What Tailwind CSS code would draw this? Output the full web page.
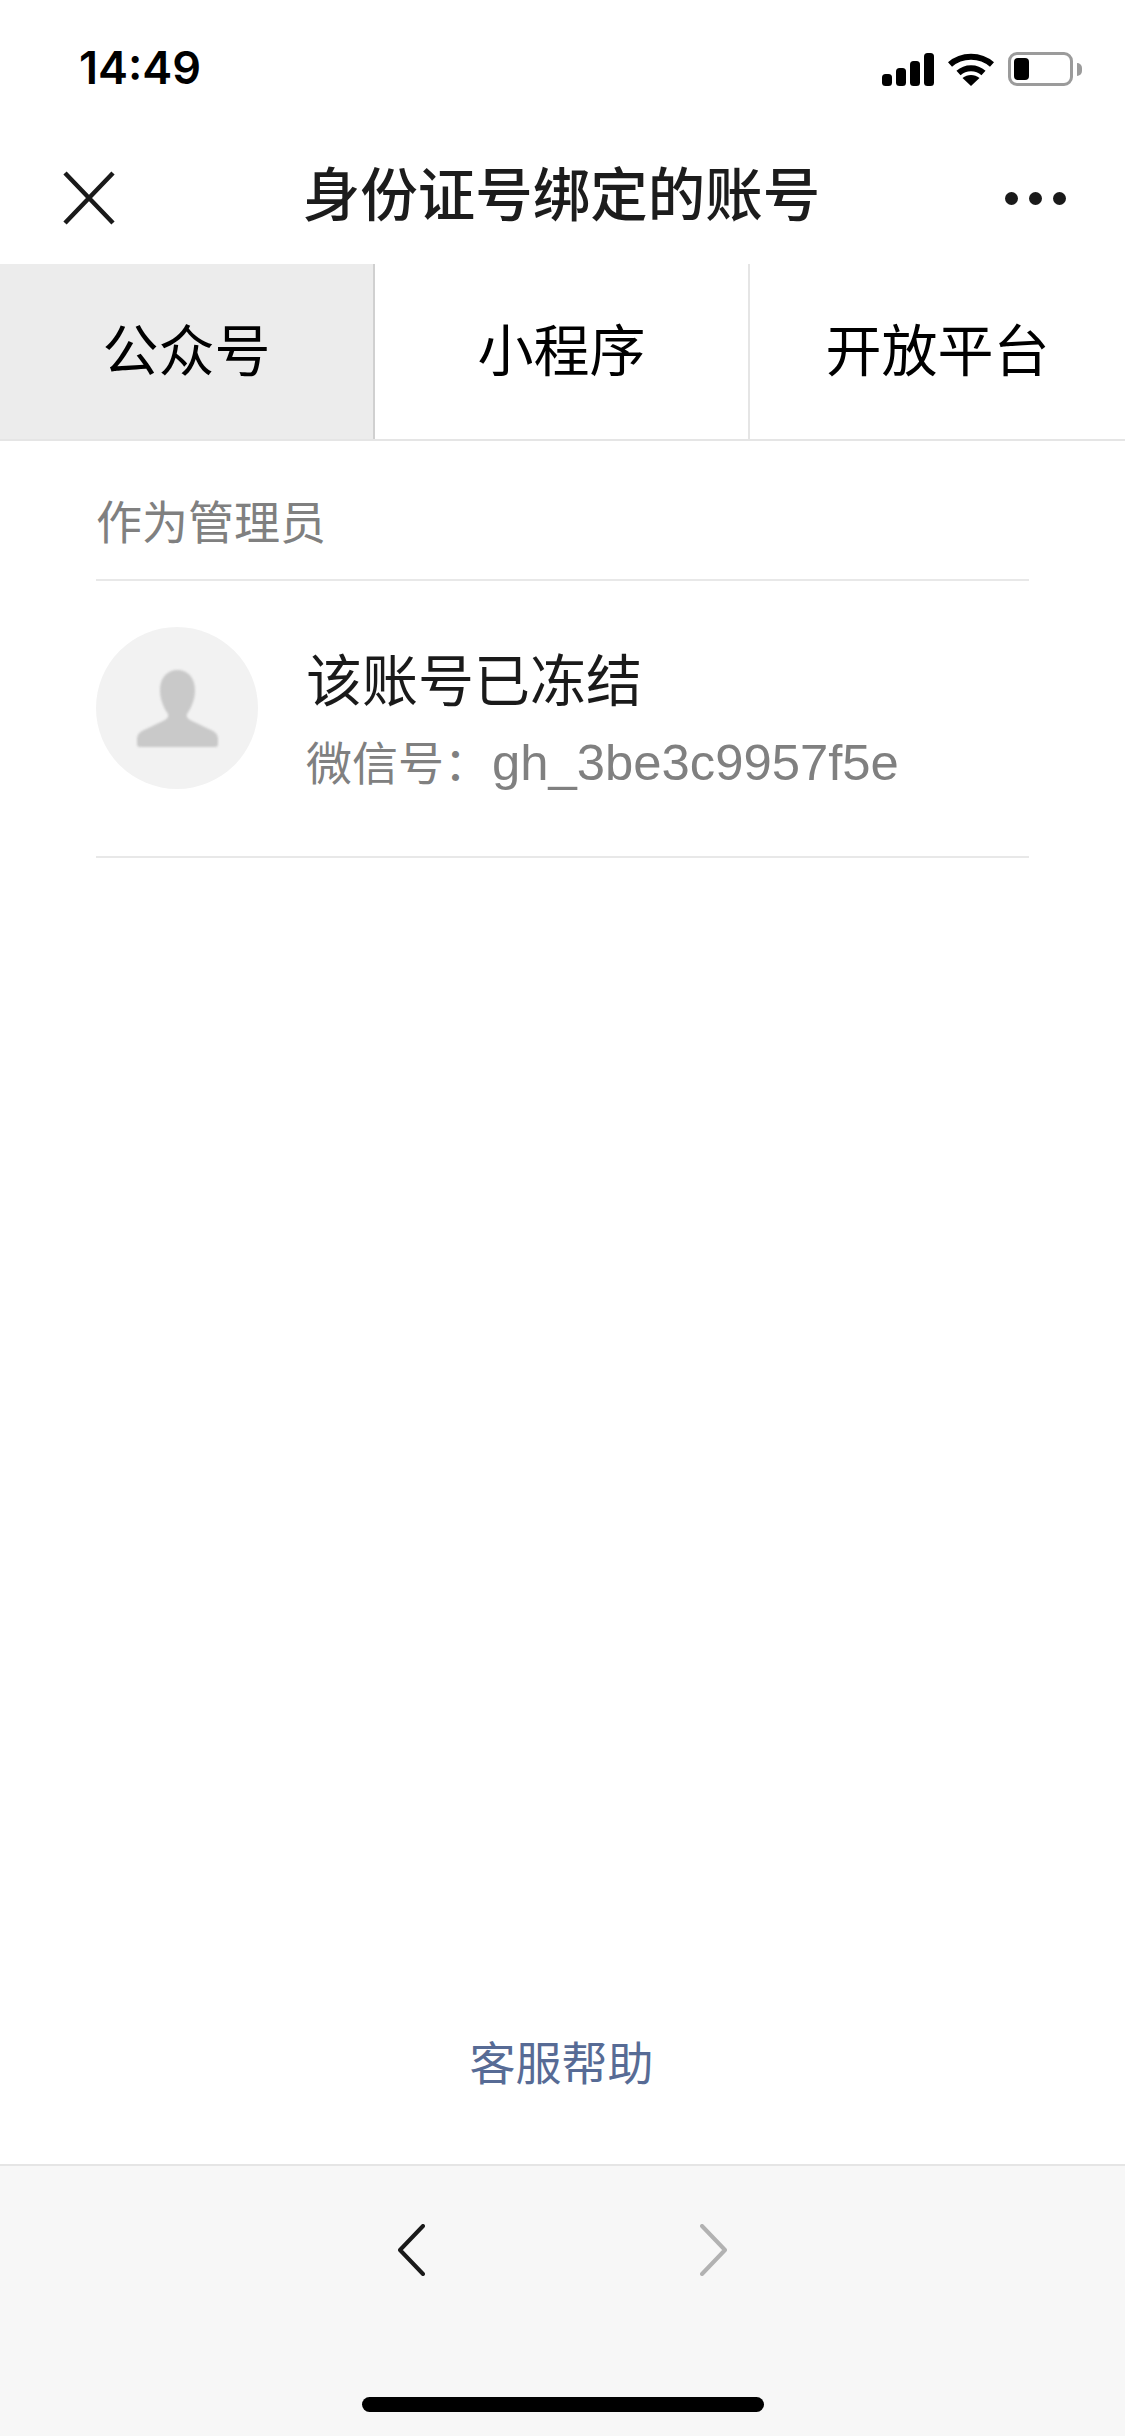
<!DOCTYPE html>
<html lang="zh-CN">
<head>
    <meta charset="UTF-8">
    <meta name="viewport" content="width=device-width, initial-scale=1.0">
    <title>身份证号绑定的账号</title>
    <script src="https://cdn.jsdelivr.net/npm/@tailwindcss/browser@4"></script>
</head>
<body class="bg-white font-['Liberation_Sans','Noto_Sans_CJK_SC',sans-serif]">
    <div class="flex h-[2436px] w-[1125px] flex-col overflow-hidden">
        <!-- status bar -->
        <div class="flex h-[132px] shrink-0 items-start justify-between pt-[46px] pl-[79px] pr-[43px]">
            <span class="font-['Inter'] text-[45px] leading-[44px] font-semibold text-black">14:49</span>
            <div class="flex items-center gap-[14px] pt-[6px]">
                <svg width="52" height="33" viewBox="0 0 52 33" fill="#000">
                    <rect x="0" y="21" width="10" height="12" rx="3.500"/>
                    <rect x="14" y="15" width="10" height="18" rx="3.500"/>
                    <rect x="28" y="8" width="10" height="25" rx="3.500"/>
                    <rect x="42" y="0" width="10" height="33" rx="3.500"/>
                </svg>
                <svg width="46" height="33" viewBox="0 0 46 33" fill="none" stroke="#000" stroke-width="6">
                    <path d="M2 11.5C13.500 1 32.500 1 44 11.500"/>
                    <path d="M10.500 20C17.500 13.500 28.500 13.500 35.500 20"/>
                    <path d="M23 33L14.500 25C19.500 21 26.500 21 31.500 25Z" fill="#000" stroke="none"/>
                </svg>
                <div class="flex items-center gap-[4px]">
                    <div class="flex h-[34px] w-[65px] items-center rounded-[9px] border-[3px] border-[#9b9b9b] p-[3px]">
                        <div class="h-full w-[15px] rounded-[4px] bg-black"></div>
                    </div>
                    <div class="h-[13px] w-[5px] rounded-r-full bg-[#9b9b9b]"></div>
                </div>
            </div>
        </div>

        <!-- nav -->
        <div class="flex h-[132px] shrink-0 items-center justify-between pl-[63px] pr-[59px]">
            <svg width="52" height="54" viewBox="0 0 52 54" fill="none" stroke="#1a1a1a" stroke-width="4.500">
                <path d="M2 2L50 52M50 2L2 52"/>
            </svg>
            <h1 class="pb-[2px] pl-[3px] text-[57.500px] leading-none font-medium text-[#1c1c1c]">身份证号绑定的账号</h1>
            <div class="flex gap-[11px]">
                <span class="size-[13px] rounded-full bg-[#1a1a1a]"></span>
                <span class="size-[13px] rounded-full bg-[#1a1a1a]"></span>
                <span class="size-[13px] rounded-full bg-[#1a1a1a]"></span>
            </div>
        </div>

        <!-- tabs -->
        <div class="grid h-[177px] shrink-0 grid-cols-[375px_375px_375px] border-b-2 border-[#e5e5e5] text-[56px] text-black">
            <div class="flex items-center justify-center border-r-2 border-[#d0d0d0] bg-[#ececec]">公众号</div>
            <div class="flex items-center justify-center border-r-2 border-[#e5e5e5]">小程序</div>
            <div class="flex items-center justify-center">开放平台</div>
        </div>

        <!-- list -->
        <div class="flex-1 px-[96px]">
            <div class="flex h-[140px] items-center border-b-2 border-[#e8e8e8] pt-[26px] text-[46px] text-[#808080]">作为管理员</div>
            <div class="flex h-[277px] items-start gap-[48px] border-b-2 border-[#e8e8e8] pt-[46px]">
                <div class="flex size-[162px] shrink-0 items-center justify-center rounded-full bg-[#f2f2f2]">
                    <svg width="81" height="77" viewBox="0 0 81 77" fill="#c9c9c9" class="blur-[1px]">
                        <path d="M40.500 0C51 0 58 8 58 20C58 30 54 38 50 44C49 47 51 49 55 51L76 61C79 63 81 65 81 69V74C81 76 80 77 78 77H3C1 77 0 76 0 74V69C0 65 2 63 5 61L26 51C30 49 32 47 31 44C27 38 23 30 23 20C23 8 30 0 40.500 0Z"/>
                    </svg>
                </div>
                <div class="mt-[15px] flex flex-col gap-[10px]">
                    <span class="text-[56px] leading-[80px] text-[#1a1a1a]">该账号已冻结</span>
                    <span class="text-[46px] leading-[62px] text-[#808080]">微信号：<span class="ml-[2px] text-[50.800px]">gh_3be3c9957f5e</span></span>
                </div>
            </div>
        </div>

        <!-- help link -->
        <div class="flex h-[100px] shrink-0 items-center justify-center pt-[4px] pr-[2px] text-[46px] text-[#576b95]">客服帮助</div>
        <div class="h-[52px] shrink-0"></div>

        <!-- bottom toolbar -->
        <div class="relative h-[272px] shrink-0 border-t-2 border-[#e5e5e5] bg-[#f7f7f7]">
            <div class="flex justify-center gap-[275px] pt-[58px]">
                <svg width="27" height="52" viewBox="0 0 27 52" fill="none" stroke="#1a1a1a" stroke-width="4" stroke-linecap="round" stroke-linejoin="round">
                    <path d="M25 2L2 26L25 50"/>
                </svg>
                <svg width="27" height="52" viewBox="0 0 27 52" fill="none" stroke="#b2b2b2" stroke-width="4" stroke-linecap="round" stroke-linejoin="round">
                    <path d="M2 2L25 26L2 50"/>
                </svg>
            </div>
            <div class="absolute bottom-[24px] left-[362px] h-[15px] w-[402px] rounded-full bg-black"></div>
        </div>
    </div>
</body>
</html>
